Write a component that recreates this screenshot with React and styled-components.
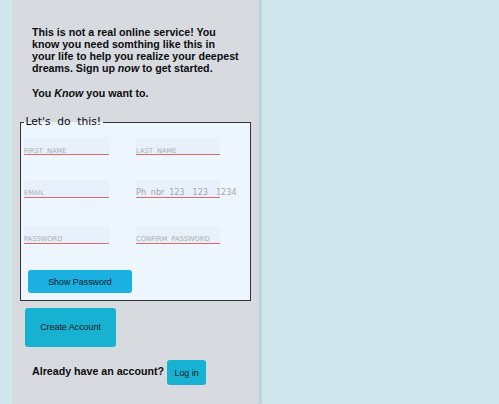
import React from "react";
import styled, { createGlobalStyle } from "styled-components";

const GlobalStyle = createGlobalStyle`
  * { box-sizing: border-box; }
  body { margin: 0; background: #cfe7ec; font-family: "Liberation Sans", Arial, sans-serif; color: #0c0c0c; }
`;

const Page = styled.main`
  height: 404px;
  overflow: hidden;
  padding-left: 12px;
`;

const Panel = styled.section`
  width: 247px;
  height: 404px;
  padding: 26px 8px 0;
  background: #d7dbe0;
  border-bottom-right-radius: 2px;
  box-shadow: 3px 0 0 #bdd3de;
`;

const Intro = styled.div`
  height: 90px;
  padding-left: 12px;
  font-size: 10.667px;
  font-weight: bold;
  line-height: 12px;
  white-space: nowrap;
`;

const Paragraph = styled.p`
  margin: 0 0 13px;
`;

const FieldGroup = styled.fieldset`
  width: 231px;
  height: 185px;
  margin: 0;
  padding: 8px 3px 0;
  border: 1px solid #333;
  background: #edf6ff;
`;

const Legend = styled.legend`
  height: 13px;
  padding: 0 1.5px;
  font: 10.667px/11px "DejaVu Sans", sans-serif;
  word-spacing: 3.4px;
`;

const Fields = styled.div`
  display: grid;
  grid-template-columns: 85px 84px;
  grid-template-rows: 43px 46px 18px;
  column-gap: 27px;
`;

const Input = styled.input`
  width: 100%;
  height: 18px;
  padding: ${({ $low }) => ($low ? "10px 0 0" : "8px 0 0")};
  border: 0;
  border-bottom: 1px solid #df6968;
  border-radius: 0;
  outline: 0;
  background: #e8f1fb;
  font: 6.7px/${({ $low }) => ($low ? 7 : 8)}px "DejaVu Sans", sans-serif;
  word-spacing: 2px;
  &::placeholder { color: #a9abac; opacity: 1; }
`;

const Phone = styled.label`
  height: 18px;
  padding-top: 6px;
  border-bottom: 1px solid #df6968;
  background: #e8f1fb;
  color: #a5a7a9;
  font: 9px/12px "DejaVu Sans Condensed", "DejaVu Sans", sans-serif;
  word-spacing: 2.2px;
  white-space: pre;
`;

const PhoneDigits = styled.span`
  word-spacing: 1.4px;
`;

const Button = styled.button`
  width: ${({ $width }) => $width}px;
  height: ${({ $height }) => $height}px;
  padding: 0 0 ${({ $raise = 0 }) => $raise}px;
  border: 0;
  border-radius: 3px;
  background: ${({ $bright }) => ($bright ? "#1bb0e2" : "#17b1d1")};
  color: #0a171c;
  font: 8.89px "Liberation Sans", Arial, sans-serif;
`;

const ShowPassword = styled.div`
  display: flex;
  margin: 26px 0 0 4px;
`;

const CreateAccount = styled.div`
  display: flex;
  padding: 7px 0 0 5px;
`;

const Login = styled.div`
  display: flex;
  align-items: center;
  gap: 3px;
  margin: 13px 0 0 12px;
  font-size: 10.667px;
  font-weight: bold;
  white-space: nowrap;
`;

const Question = styled.span`
  padding-bottom: 3px;
`;

export default function App() {
  return (
    <Page>
      <GlobalStyle />
      <Panel>
        <Intro>
          <Paragraph>
            This is not a real online service! You<br />
            know you need somthing like this in<br />
            your life to help you realize your deepest<br />
            dreams. Sign up <em>now</em> to get started.
          </Paragraph>
          <Paragraph>You <em>Know</em> you want to.</Paragraph>
        </Intro>
        <FieldGroup>
          <Legend>Let's do this!</Legend>
          <Fields>
            <Input $low placeholder="FIRST NAME" />
            <Input $low placeholder="LAST NAME" />
            <Input placeholder="EMAIL" />
            <Phone>Ph nbr 123<PhoneDigits>{"  123  1234"}</PhoneDigits></Phone>
            <Input placeholder="PASSWORD" />
            <Input placeholder="CONFIRM PASSWORD" />
          </Fields>
          <ShowPassword>
            <Button $width={104} $height={23} $bright>Show Password</Button>
          </ShowPassword>
        </FieldGroup>
        <CreateAccount>
          <Button $width={91} $height={39} $raise={2}>Create Account</Button>
        </CreateAccount>
        <Login>
          <Question>Already have an account?</Question>
          <Button $width={39} $height={25}>Log in</Button>
        </Login>
      </Panel>
    </Page>
  );
}
